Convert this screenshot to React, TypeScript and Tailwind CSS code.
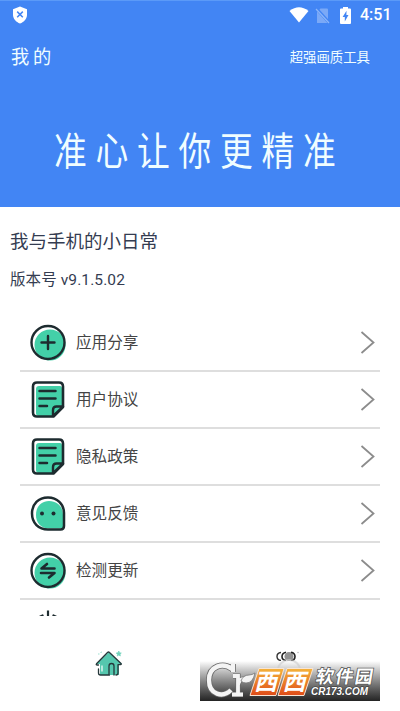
import type { ReactNode } from 'react';

const INK = '#1d2b2f';
const MINT = '#43d0a8';

interface MenuItem {
  id: string;
  label: string;
  icon: ReactNode;
}

function PlusIcon() {
  return (
    <svg width="38" height="38" viewBox="0 0 38 38" fill="none">
      <circle cx="21" cy="21" r="15.5" fill={MINT} />
      <circle cx="19" cy="18.5" r="16.5" stroke={INK} strokeWidth="2.4" />
      <path d="M19 12v13M12.5 18.5h13" stroke={INK} strokeWidth="2.4" strokeLinecap="round" />
    </svg>
  );
}

function DocumentIcon() {
  return (
    <svg width="38" height="38" viewBox="0 0 38 38" fill="none">
      <path d="M10 5h21q2 0 2 3v18l-9 9H10q-3 0-3-3V8q0-3 3-3z" fill={MINT} />
      <path
        d="M8 1.5h22q4 0 4 4V26L24.5 35.5H8q-4 0-4-4v-26q0-4 4-4z"
        stroke={INK}
        strokeWidth="2.6"
        strokeLinejoin="round"
      />
      <path d="M24 35v-6q0-3.5 3.5-3.5H34z" fill={MINT} stroke={INK} strokeWidth="2.4" strokeLinejoin="round" />
      <path d="M10.5 10h16M10.5 17.5h16M10.5 25h7.5" stroke={INK} strokeWidth="2.5" strokeLinecap="round" />
    </svg>
  );
}

function FeedbackIcon() {
  return (
    <svg width="38" height="38" viewBox="0 0 38 38" fill="none">
      <path d="M20 6c8.5 0 14 6 14 14v13.500H20C12 33.500 7 28 7 20S12 6 20 6z" fill={MINT} />
      <path
        d="M19 2.5c9 0 16 6.5 16 15.5v13q0 3.5-3.5 3.5H19C9.5 34.5 3 28 3 18.5S9.5 2.5 19 2.5z"
        stroke={INK}
        strokeWidth="2.5"
      />
      <circle cx="13" cy="18.5" r="2" fill={INK} />
      <circle cx="24.5" cy="18.5" r="2" fill={INK} />
    </svg>
  );
}

function UpdateIcon() {
  return (
    <svg width="38" height="38" viewBox="0 0 38 38" fill="none">
      <circle cx="21" cy="21" r="15.5" fill={MINT} />
      <circle cx="19" cy="18.5" r="16.5" stroke={INK} strokeWidth="2.4" />
      <path
        d="M25.5 16.5H12.5L18 12M12 21h13.5L20 25.5"
        stroke={INK}
        strokeWidth="2.6"
        strokeLinecap="round"
        strokeLinejoin="round"
      />
    </svg>
  );
}

function PowerIcon() {
  return (
    <svg width="38" height="38" viewBox="0 0 38 38" fill="none">
      <path d="M13.5 6.5A15.500 15.500 0 1 0 24.500 6.500" stroke={INK} strokeWidth="2.2" strokeLinecap="round" />
      <path d="M19 1.500v14" stroke={INK} strokeWidth="2.2" />
    </svg>
  );
}

const MENU_ITEMS: MenuItem[] = [
  { id: 'share', label: '应用分享', icon: <PlusIcon /> },
  { id: 'terms', label: '用户协议', icon: <DocumentIcon /> },
  { id: 'privacy', label: '隐私政策', icon: <DocumentIcon /> },
  { id: 'feedback', label: '意见反馈', icon: <FeedbackIcon /> },
  { id: 'update', label: '检测更新', icon: <UpdateIcon /> },
];

function StatusBar() {
  return (
    <div className="flex h-7 items-center justify-between pr-[10px] pl-[13px]">
      <svg width="14" height="18" viewBox="0 0 14 18">
        <path d="M7 0.5 14 3.2v5.5c0 4-3 7.3-7 8.8-4-1.5-7-4.8-7-8.8V3.2z" fill="#fff" />
        <path d="m4.2 5.6 5.6 5.6m0-5.6-5.6 5.6" stroke="#4285f4" strokeWidth="1.5" />
      </svg>
      <div className="flex items-center text-white">
        <svg width="20" height="16" viewBox="0 0 20 16">
          <path d="M0.5 4Q10-3.5 19.5 4L10 15.5z" fill="#fff" />
        </svg>
        <svg className="ml-[6px]" width="16" height="17" viewBox="0 0 16 17">
          <path d="M5.5 1.5H12q1 0 1 1V16H2V5z" fill="#fff" opacity=".3" />
          <path d="m1 1 13.5 15" stroke="#4285f4" strokeWidth="3" />
          <path d="m1 2 13 14" stroke="#8db6f9" strokeWidth="1.2" />
        </svg>
        <svg className="ml-[9px]" width="11" height="17" viewBox="0 0 11 17">
          <path d="M3 0h5v1.5h2q1 0 1 1V16q0 1-1 1H1q-1 0-1-1V2.5q0-1 1-1h2z" fill="#fff" />
          <path d="M6.5 3.8 2.6 10h2.2v4.5L8.5 8H6.4z" fill="#4285f4" />
        </svg>
        <span className="ml-[9px] w-[30px] font-[Roboto] text-[16px] leading-none font-medium whitespace-nowrap">4:51</span>
      </div>
    </div>
  );
}

function Header() {
  return (
    <header className="h-[207px] border-t border-[#5b9af8] bg-[#4285f4] text-[#f0fdff]">
      <StatusBar />
      <div className="flex h-[56px] items-center justify-between pr-[30px] pl-[11px]">
        <h1 className="origin-left scale-x-[.96] text-[19px] leading-none font-normal tracking-[4px]">我的</h1>
        <span className="pt-px text-[13.4px] leading-none">超强画质工具</span>
      </div>
      <p className="mt-[47px] ml-[54px] origin-left scale-x-[.84] text-[39px] leading-[40px] font-normal tracking-[10.4px] whitespace-nowrap">
        准心让你更精准
      </p>
    </header>
  );
}

function MenuRow({ item }: { item: MenuItem }) {
  return (
    <li className="flex h-[57px] items-center border-b-2 border-[#dedede] pr-[5px] pl-[9px]">
      {item.icon}
      <span className="ml-[9px] flex-1 pt-[2px] text-[15.6px] leading-none text-[#444]">{item.label}</span>
      <svg width="15" height="24" viewBox="0 0 15 24" fill="none">
        <path d="m1.5 1 12 10.5-12 10.5" stroke="#8c8c8c" strokeWidth="1.8" />
      </svg>
    </li>
  );
}

function HomeIcon() {
  return (
    <svg width="30" height="30" viewBox="0 0 30 30" fill="none">
      <path d="M15 3 28 15h-3v11H6V15H2z" fill="#55c7ae" />
      <path
        d="M4.5 20v4q0 2 2 2h9M20 26v-9q0-2.5-2.5-2.5T15 17v8M24 16v8q0 2-2 2M4.5 16H2.8q-1-.3-.3-1.2L13.5 3.5q1-1 2 0L27 14.5q.8 1-.5 1.2H24"
        stroke="#26383b"
        strokeWidth="1.3"
        strokeLinecap="round"
        strokeLinejoin="round"
      />
      <path d="M8 16.5v6" stroke="#fff" strokeWidth="1.2" />
      <path
        d="m24.8 2 .7 1.8 1.8.3-1.3 1.2.3 1.7-1.5-.9-1.6.9.4-1.7-1.4-1.2 1.9-.3zM4 5h1.5M6.5 3.5 8 3"
        fill="#71d2bc"
        stroke="#71d2bc"
        strokeWidth=".7"
      />
    </svg>
  );
}

function ProfileIcon() {
  return (
    <svg width="25" height="12" viewBox="0 0 25 12" fill="none">
      <path d="M6 1.5Q2 2 2 5.5T6 9.5" stroke="#333" strokeWidth="1.4" />
      <path d="M11 1.2Q7 2 7 5.5t4 4" stroke="#222" strokeWidth="1.6" />
      <circle cx="14" cy="5.5" r="4.5" fill="#929292" />
      <path d="M16 1.2q4 .7 4 4.3t-4 4.2" stroke="#222" strokeWidth="1.6" />
      <circle cx="23" cy="1.5" r=".8" fill="#bbb" />
    </svg>
  );
}

function SiteBadge() {
  return (
    <div className="absolute top-[661px] left-[200px] h-[40px] w-[180px] bg-linear-to-b from-white via-[#898989] to-[#242424]">
      <svg className="overflow-visible" width="180" height="40" viewBox="0 0 180 40">
        <defs>
          <linearGradient id="orange" x1="0" y1="0" x2="0" y2="1">
            <stop offset="0" stopColor="#f5b33a" />
            <stop offset="1" stopColor="#df4b18" />
          </linearGradient>
        </defs>
        <path d="M78 9a11 10 0 0 1 22 0" fill="none" stroke="#ccc" strokeWidth="2" opacity=".6" />
        {/* leafy "Cr" monogram */}
        <g fill="none">
          <path d="M32 8C23 1 9 5 9 19c0 15 14 18 22 10M33 3v8" stroke="#666" strokeWidth="6" />
          <path d="M33 15h5v18M32 33.5h11M38 24q1-6 6-6" stroke="#666" strokeWidth="5.2" />
          <path d="M32 8C23 1 9 5 9 19c0 15 14 18 22 10M33 3v8" stroke="#f4f4f4" strokeWidth="4.4" />
          <path d="M33 15h5v18M32 33.5h11M38 24q1-6 6-6" stroke="#f4f4f4" strokeWidth="3.8" />
        </g>
        <path d="M41 20q2-6 8-6 3 0 6-2-2 10-9 10-3 0-5-2z" fill="#f4f4f4" stroke="#777" strokeWidth=".8" />
        <path d="M59 7.5h25l-8 27H50z" fill="url(#orange)" stroke="#f8e5d5" strokeWidth="1" />
        <path d="M87 7.5h26l-9 27H78z" fill="url(#orange)" stroke="#f8e5d5" strokeWidth="1" />
        <g fill="#fff" fontFamily="Noto Sans CJK SC, sans-serif" fontWeight="700">
          <text transform="translate(54 29) skewX(-14)" fontSize="23">西</text>
          <text transform="translate(82.5 29) skewX(-14)" fontSize="23">西</text>
          <text
            transform="translate(115 22) skewX(-10)"
            fontSize="18"
            fontWeight="700"
            textLength="57"
            stroke="#555"
            strokeWidth="1.5"
            paintOrder="stroke"
          >
            软件园
          </text>
        </g>
        <text
          x="111"
          y="33.5"
          fill="#fff"
          stroke="#333"
          strokeWidth="1.2"
          paintOrder="stroke"
          fontFamily="Liberation Sans, sans-serif"
          fontSize="10.5"
          fontWeight="700"
          fontStyle="italic"
          textLength="57"
          lengthAdjust="spacingAndGlyphs"
        >
          CR173.COM
        </text>
      </svg>
    </div>
  );
}

function App() {
  return (
    <div className="relative flex h-[711px] w-[400px] flex-col overflow-hidden bg-white font-['Roboto','Noto_Sans_CJK_SC',sans-serif]">
      <Header />

      <section className="flex h-[108px] flex-col pt-[25px] pl-[10px] text-[#343c51]">
        <h2 className="text-[18.5px] leading-[20px] font-normal">我与手机的小日常</h2>
        <p className="mt-[18px] text-[15.5px] leading-[20px] tracking-[.1px]">版本号 v9.1.5.02</p>
      </section>

      <ul className="mx-5 h-[301px] overflow-hidden">
        {MENU_ITEMS.map((item) => (
          <MenuRow key={item.id} item={item} />
        ))}
        <li className="flex pt-[9px] pl-[9px]">
          <PowerIcon />
        </li>
      </ul>

      <nav className="flex flex-1">
        <div className="flex flex-1 justify-center pt-[33px] pl-5">
          <HomeIcon />
        </div>
        <div className="flex flex-1 justify-center pt-[35px] pr-6">
          <ProfileIcon />
        </div>
      </nav>

      <SiteBadge />
    </div>
  );
}

export default App;
